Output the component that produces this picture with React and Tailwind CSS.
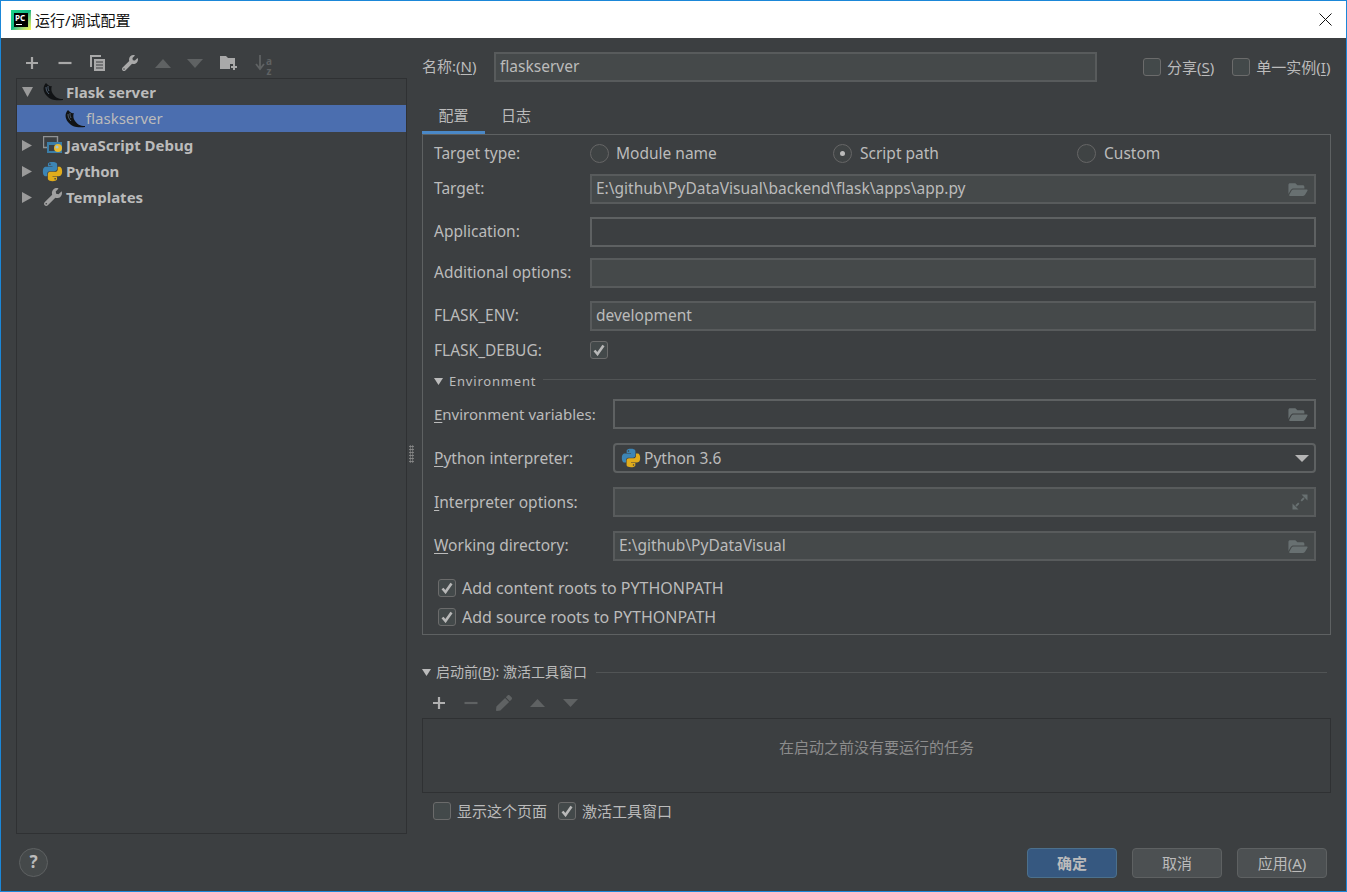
import React from "react";
import { FaWrench, FaFolderOpen, FaPen } from "react-icons/fa";

const fontStack = "font-['Noto_Sans','Noto_Sans_CJK_SC',sans-serif]";

function Tri({ dir = "down", className = "" }) {
  const pts = { down: "0,0 12,0 6,10", up: "0,10 12,10 6,0", right: "0,0 10,6 0,12" }[dir];
  const box = dir === "right" ? "0 0 10 12" : "0 0 12 10";
  return (
    <svg viewBox={box} preserveAspectRatio="none" className={className}>
      <polygon points={pts} fill="currentColor" />
    </svg>
  );
}

function Plus({ className = "" }) {
  return (
    <svg viewBox="0 0 14 14" className={`w-[14px] h-[14px] ${className}`}>
      <path d="M7 1v12M1 7h12" stroke="currentColor" strokeWidth="2.2" />
    </svg>
  );
}

function Minus({ className = "" }) {
  return (
    <svg viewBox="0 0 14 14" className={`w-[14px] h-[14px] ${className}`}>
      <path d="M0.5 7h13" stroke="currentColor" strokeWidth="2.2" />
    </svg>
  );
}

function CopyIcon() {
  return (
    <svg viewBox="0 0 16 16" className="w-4 h-4 text-[#a9a9a9]">
      <path d="M1 0h11v2H3v10H1z" fill="currentColor" />
      <path d="M5 4h11v12H5z" fill="currentColor" />
      <path d="M7 7h7M7 10h7M7 13h7" stroke="#3c3f41" strokeWidth="1" />
    </svg>
  );
}

function FolderPlus() {
  return (
    <svg viewBox="0 0 18 16" className="w-[18px] h-4 text-[#a9a9a9]">
      <path d="M0 1h6l2 2h7v6h-5v5H0z" fill="currentColor" />
      <path d="M14 9v6M11 12h6" stroke="currentColor" strokeWidth="2" />
    </svg>
  );
}

function SortIcon() {
  return (
    <div className="flex items-start w-[18px] h-[18px] text-[#5f6263]">
      <svg viewBox="0 0 10 18" className="w-[10px] h-[18px] shrink-0">
        <path d="M5 1v14M1 10l4 5 4-5" fill="none" stroke="currentColor" strokeWidth="1.8" />
      </svg>
      <span className="[writing-mode:vertical-rl] [text-orientation:upright] text-[10px] leading-[8px] font-bold tracking-[-4px]">az</span>
    </div>
  );
}

function FlaskHorn({ className = "" }) {
  return (
    <svg viewBox="0 0 20 18" className={className}>
      <path d="M3 0C0 3-.5 8 3 12c4 5 10 6 17 5v-1c-5 0-8-2-10-5C8 8 8 5 9 3 7 4 5 2 3 0z" fill="#111315" />
      <path d="M3 4c0 3 1 5 3 7M5 3c0 2 0 3 1 5" stroke="#56687a" strokeWidth="0.9" fill="none" />
    </svg>
  );
}

function PythonIcon({ className = "" }) {
  const d = "M11.9 1C6.5 1 6.8 3.4 6.8 3.4V5.9H12V6.7H4.6C4.6 6.7 1 6.3 1 11.9c0 5.6 3.1 5.4 3.1 5.4H6v-2.6s-.1-3.1 3.1-3.1h5.2s3 0 3-2.9V3.9S17.8 1 11.9 1zM9 2.7a.95.95 0 1 1 0 1.9.95.95 0 0 1 0-1.9z";
  return (
    <svg viewBox="0 0 24 24" className={className}>
      <path d={d} fill="#3c85b5" fillRule="evenodd" />
      <path d={d} fill="#e0ac1c" fillRule="evenodd" transform="rotate(180 12 12)" />
    </svg>
  );
}

function JsDebugIcon() {
  return (
    <svg viewBox="0 0 20 18" className="w-5 h-[18px]">
      <path d="M0.5 0.5h14v11h-14z" fill="none" stroke="#8f9294" strokeWidth="1.4" />
      <path d="M4 6h15v11H4z" fill="#3b7ea8" />
      <path d="M6 9h6v6H6z" fill="#3c3f41" />
      <circle cx="15" cy="12" r="4" fill="#e8b92e" />
      <circle cx="14" cy="11" r="1.6" fill="#9dc3d8" />
    </svg>
  );
}

function Check({ checked, className = "" }) {
  return (
    <span className={`flex items-center justify-center w-[18px] h-[18px] shrink-0 rounded-[3px] border border-[#6b6b6b] bg-[#43494a] ${className}`}>
      {checked && (
        <svg viewBox="0 0 12 12" className="w-3 h-3">
          <path d="M1.5 6.5l3 3.5 6-8.5" fill="none" stroke="#b8b8b8" strokeWidth="2.6" />
        </svg>
      )}
    </span>
  );
}

function Radio({ on }) {
  return (
    <span className="flex items-center justify-center w-[19px] h-[19px] rounded-full border border-[#666] bg-[#3f4344]">
      {on && <span className="w-[5px] h-[5px] rounded-full bg-[#bbb]" />}
    </span>
  );
}

function Field({ children, value, disabled = true, className = "flex-1" }) {
  return (
    <div className={`h-[30px] flex items-center justify-between pl-[4px] pr-[6px] border-2 ${disabled ? "bg-[#45494a] border-[#585b5c]" : "bg-[#3c3f41] border-[#5e6162]"} ${className}`}>
      <span className="mb-[2px]">{value}</span>
      {children}
    </div>
  );
}

function Folder() {
  return <FaFolderOpen className="w-[20px] h-[17px] text-[#687071]" />;
}

function Row({ label, w = "w-[156px]", labelClass = "mb-[2px]", className = "", children }) {
  return (
    <div className={`flex items-center h-[30px] ${className}`}>
      <span className={`${w} shrink-0 ${labelClass}`}>{label}</span>
      {children}
    </div>
  );
}

const U = ({ children }) => <span className="underline underline-offset-2 decoration-1">{children}</span>;

const treeRows = [
  { label: "JavaScript Debug", icon: <JsDebugIcon /> },
  { label: "Python", icon: <PythonIcon className="w-[21px] h-[21px] -ml-px" /> },
  { label: "Templates", icon: <FaWrench className="w-[18px] h-[18px] text-[#a0a0a0] ml-px" /> },
];

export default function App() {
  return (
    <div className={`w-[1347px] h-[892px] flex flex-col border border-[#1b87d8] bg-[#3c3f41] text-[#bbbbbb] text-[15.5px] leading-5 overflow-hidden ${fontStack}`}>
      {/* title bar */}
      <div className="h-[37px] shrink-0 bg-white flex items-center pl-[10px] pr-[14px] text-[#111] text-[15px]">
        <div className="relative w-[20px] h-[20px] bg-gradient-to-br from-[#21d789] via-[#12b886] to-[#fcf84a]">
          <div className="absolute left-[3px] top-[3px] w-[14px] h-[14px] bg-black text-white text-[8px] leading-[9px] font-bold pl-px">
            PC
            <span className="absolute left-[2px] bottom-[2px] w-[6px] h-px bg-white" />
          </div>
        </div>
        <span className="ml-[4px]">运行/调试配置</span>
        <svg viewBox="0 0 13 13" className="ml-auto w-[13px] h-[13px]">
          <path d="M0.5 0.5l12 12M12.5 0.5l-12 12" stroke="#111" strokeWidth="1" />
        </svg>
      </div>

      <div className="flex-1 flex min-h-0">
        {/* left column */}
        <div className="w-[406px] shrink-0 pl-[15px] flex flex-col text-[15px]">
          <div className="h-[40px] shrink-0 flex items-center pl-[8px] pt-[10px] gap-[16.7px] text-[#a9a9a9]">
            <Plus className="mx-px" />
            <Minus className="mx-px" />
            <CopyIcon />
            <FaWrench className="w-4 h-4" />
            <Tri dir="up" className="w-4 h-[9px] text-[#5f6263]" />
            <Tri dir="down" className="w-4 h-[9px] text-[#5f6263]" />
            <FolderPlus />
            <SortIcon />
          </div>
          <div className="flex-1 border border-[#2f3133]">
            <div className="h-[26px] flex items-center pl-[5px] font-bold">
              <Tri dir="down" className="w-[11px] h-[10px] text-[#9a9a9a] mr-[10px]" />
              <FlaskHorn className="w-5 h-[18px] mr-[3px]" />
              Flask server
            </div>
            <div className="h-[27px] flex items-center pl-[48px] bg-[#4b6eaf]">
              <FlaskHorn className="w-5 h-[18px] mr-px" />
              <span className="mb-[2px]">flaskserver</span>
            </div>
            {treeRows.map((r) => (
              <div key={r.label} className="h-[26px] flex items-center pl-[5px] font-bold">
                <Tri dir="right" className="w-[10px] h-[11px] text-[#9a9a9a] mr-[11px]" />
                <span className="w-[23px] flex">{r.icon}</span>
                {r.label}
              </div>
            ))}
          </div>
          <div className="h-[57px] shrink-0 flex items-center pl-[3px] pb-px">
            <div className="w-[29px] h-[29px] rounded-full border border-[#5e6162] bg-[#45494a] flex items-center justify-center text-[17px] font-bold">?</div>
          </div>
        </div>

        {/* splitter */}
        <div className="w-[15px] shrink-0 flex items-center pb-[2px] pl-[2px]">
          <div className="w-[5px] h-[18px] mt-[-20px] bg-[radial-gradient(#8a8a8a_0.8px,transparent_1px)] bg-[length:2.5px_3px]" />
        </div>

        {/* right column */}
        <div className="w-[909px] shrink-0 flex flex-col">
          <div className="mt-[14px] h-[30px] flex items-center">
            <span className="w-[72px] shrink-0 mb-[2px] text-[15px]">名称:(<U>N</U>)</span>
            <Field value="flaskserver" className="w-[603px] shrink-0" />
            <Check className="ml-[46px]" />
            <span className="ml-[6px] text-[15px]">分享(<U>S</U>)</span>
            <Check className="ml-[18px]" />
            <span className="ml-[6px] text-[15px] whitespace-nowrap">单一实例(<U>I</U>)</span>
          </div>

          <div className="mt-[18px] h-[34px] flex text-[15px]">
            <div className="w-[63px] flex items-center justify-center border-b-[3px] border-[#4a88c7] pb-[2px]">配置</div>
            <div className="ml-[16px] flex items-center pb-[4px]">日志</div>
          </div>

          <div className="h-[501px] border border-[#5e6162] pl-[11px] pr-[14px]">
            <div className="flex items-center h-[37px]">
              <span className="w-[156px] mb-[2px]">Target type:</span>
              <div className="w-[243px] flex items-center">
                <Radio />
                <span className="ml-[7px] mb-[2px]">Module name</span>
              </div>
              <div className="w-[244px] flex items-center">
                <Radio on />
                <span className="ml-[8px] mb-[2px]">Script path</span>
              </div>
              <div className="flex items-center">
                <Radio />
                <span className="ml-[8px] mb-[2px]">Custom</span>
              </div>
            </div>
            <Row label="Target:" className="mt-[2px]">
              <Field value="E:\github\PyDataVisual\backend\flask\apps\app.py"><Folder /></Field>
            </Row>
            <Row label="Application:" className="mt-[13px]">
              <Field disabled={false} />
            </Row>
            <Row label="Additional options:" className="mt-[11px]">
              <Field />
            </Row>
            <Row label="FLASK_ENV:" className="mt-[13px]">
              <Field value="development" />
            </Row>
            <Row label="FLASK_DEBUG:" labelClass="" className="mt-[4px]">
              <Check checked />
            </Row>

            <div className="mt-[8px] h-4 flex items-center text-[13px] tracking-[0.8px]">
              <Tri dir="down" className="w-[9px] h-[7px] text-[#bbb] mr-[6px]" />
              Environment
              <div className="flex-1 h-px bg-[#515455] ml-[7px] mt-[-4px]" />
            </div>

            <Row label={<><U>E</U>nvironment variables:</>} w="w-[179px]" labelClass="text-[15px]" className="mt-[10px]">
              <Field disabled={false}><Folder /></Field>
            </Row>
            <Row label={<><U>P</U>ython interpreter:</>} w="w-[179px]" labelClass="" className="mt-[14px]">
              <div className="flex-1 h-[30px] flex items-center pl-[6px] pr-[5px] border-2 border-[#5e6162] rounded-[4px]">
                <PythonIcon className="w-[20px] h-[20px] mr-[3px]" />
                <span>Python 3.6</span>
                <Tri dir="down" className="ml-auto w-[14px] h-[7px] text-[#b5b5b5]" />
              </div>
            </Row>
            <Row label={<><U>I</U>nterpreter options:</>} w="w-[179px]" labelClass="" className="mt-[14px]">
              <Field>
                <svg viewBox="0 0 16 16" className="w-4 h-4 text-[#687071]">
                  <path d="M9.5 0.5h6v6zM0.5 9.5v6h6z" fill="currentColor" />
                  <path d="M12 4l-2.8 2.8M4 12l2.8-2.8" stroke="currentColor" strokeWidth="1.8" />
                </svg>
              </Field>
            </Row>
            <Row label={<><U>W</U>orking directory:</>} w="w-[179px]" className="mt-[14px]">
              <Field value="E:\github\PyDataVisual"><Folder /></Field>
            </Row>

            <div className="mt-[13px] h-7 flex items-center pl-[4px] text-[16px]">
              <Check checked />
              <span className="ml-[6px]">Add content roots to PYTHONPATH</span>
            </div>
            <div className="mt-px h-7 flex items-center pl-[4px] text-[16px]">
              <Check checked />
              <span className="ml-[6px]">Add source roots to PYTHONPATH</span>
            </div>
          </div>

          <div className="mt-[29px] h-4 flex items-center text-[14px] pr-[4px]">
            <Tri dir="down" className="w-[9px] h-[7px] text-[#bbb] mr-[5px]" />
            启动前(<U>B</U>): 激活工具窗口
            <div className="flex-1 h-px bg-[#515455] ml-[9px]" />
          </div>

          <div className="h-[38px] flex items-center pl-[10px] gap-[18px] pt-[8px] text-[#5f6263]">
            <Plus className="text-[#b0b0b0]" />
            <Minus />
            <FaPen className="w-[16px] h-[16px]" />
            <Tri dir="up" className="w-[15px] h-[8px]" />
            <Tri dir="down" className="w-[15px] h-[8px]" />
          </div>

          <div className="h-[75px] border border-[#2f3133] flex items-center justify-center pb-[18px] text-[15px] text-[#8c8c8c]">
            在启动之前没有要运行的任务
          </div>

          <div className="mt-[6px] h-6 flex items-center pl-[11px] text-[15px]">
            <Check />
            <span className="ml-[6px]">显示这个页面</span>
            <Check checked className="ml-[11px]" />
            <span className="ml-[6px]">激活工具窗口</span>
          </div>

          <div className="mt-[25px] h-[30px] flex justify-end gap-[15px] pr-[4px] text-[15px]">
            <button className="w-[90px] rounded-[4px] border border-[#4c708c] bg-[#365880] font-bold">确定</button>
            <button className="w-[90px] rounded-[4px] border border-[#5e6162] bg-[#4c5052]">取消</button>
            <button className="w-[90px] rounded-[4px] border border-[#5e6162] bg-[#4c5052]">应用(<U>A</U>)</button>
          </div>
        </div>
      </div>
    </div>
  );
}
